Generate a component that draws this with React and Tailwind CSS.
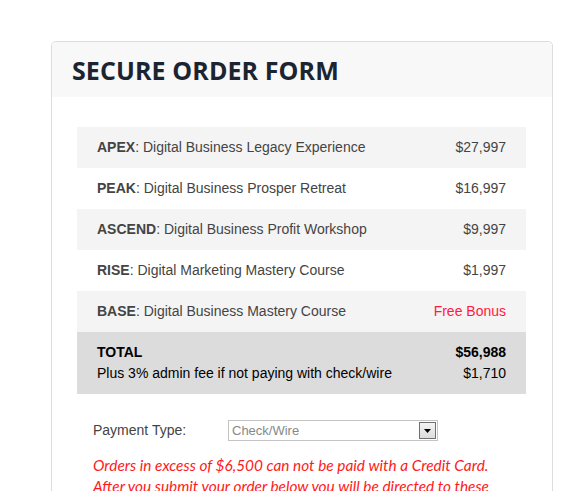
import React from "react";

const items = [
  { code: "APEX", name: "Digital Business Legacy Experience", price: "$27,997", shade: true },
  { code: "PEAK", name: "Digital Business Prosper Retreat", price: "$16,997" },
  { code: "ASCEND", name: "Digital Business Profit Workshop", price: "$9,997", shade: true },
  { code: "RISE", name: "Digital Marketing Mastery Course", price: "$1,997" },
  { code: "BASE", name: "Digital Business Mastery Course", price: "Free Bonus", shade: true, bonus: true },
];

export default function App() {
  return (
    <div className="min-h-[491px] bg-white pt-[41px] pl-[51px]" style={{ fontFamily: "Arial, 'Liberation Sans', sans-serif" }}>
      <div className="w-[502px] h-[470px] overflow-hidden rounded-t-[5px] border border-[#dddddd] border-b-0 bg-white">
        <div className="h-[55px] bg-[#f8f8f8] px-[20px] flex items-center">
          <h1 className="text-[25px] font-bold text-[#1c2431] tracking-[0.1px] leading-none pt-[2px]" style={{ fontFamily: "'Open Sans', sans-serif" }}>
            SECURE ORDER FORM
          </h1>
        </div>

        <div className="px-[25px] pt-[30px]">
          <div className="w-[449px] text-[14px] text-[#444444]">
            {items.map((it) => (
              <div
                key={it.code}
                className={`h-[41px] flex items-center justify-between px-[20px] ${it.shade ? "bg-[#f4f4f4]" : "bg-white"}`}
              >
                <span>
                  <b className="font-bold">{it.code}</b>: {it.name}
                </span>
                <span className={it.bonus ? "text-[#ff1a40]" : ""}>{it.price}</span>
              </div>
            ))}
            <div className="h-[62px] bg-[#dcdcdc] px-[20px] pt-[10px] text-black leading-[21px]">
              <div className="flex justify-between font-bold">
                <span>TOTAL</span>
                <span>$56,988</span>
              </div>
              <div className="flex justify-between">
                <span>Plus 3% admin fee if not paying with check/wire</span>
                <span>$1,710</span>
              </div>
            </div>
          </div>

          <div className="mt-[26px] pl-[16px] flex items-center">
            <span className="w-[135px] text-[14px] text-[#444444]">Payment Type:</span>
            <div className="w-[210px] h-[21px] border border-[#c4c4c4] bg-white flex items-center justify-between">
              <span className="pl-[3px] text-[13px] text-[#888888]" style={{ fontFamily: "'Liberation Sans', sans-serif" }}>Check/Wire</span>
              <span className="mr-[1px] w-[17px] h-[17px] border border-[#707070] bg-gradient-to-b from-[#f4f4f4] to-[#dcdcdc] flex items-center justify-center">
                <svg width="7" height="4" viewBox="0 0 7 4">
                  <path d="M0 0h7L3.5 4z" fill="#000" />
                </svg>
              </span>
            </div>
          </div>

          <p className="mt-[14px] pl-[16px] text-[15.4px] leading-[21px] italic font-normal text-[#ff1a1a] whitespace-nowrap" style={{ fontFamily: "Lato, sans-serif" }}>
            Orders in excess of $6,500 can not be paid with a Credit Card.
            <br />
            After you submit your order below you will be directed to these
          </p>
        </div>
      </div>
    </div>
  );
}
